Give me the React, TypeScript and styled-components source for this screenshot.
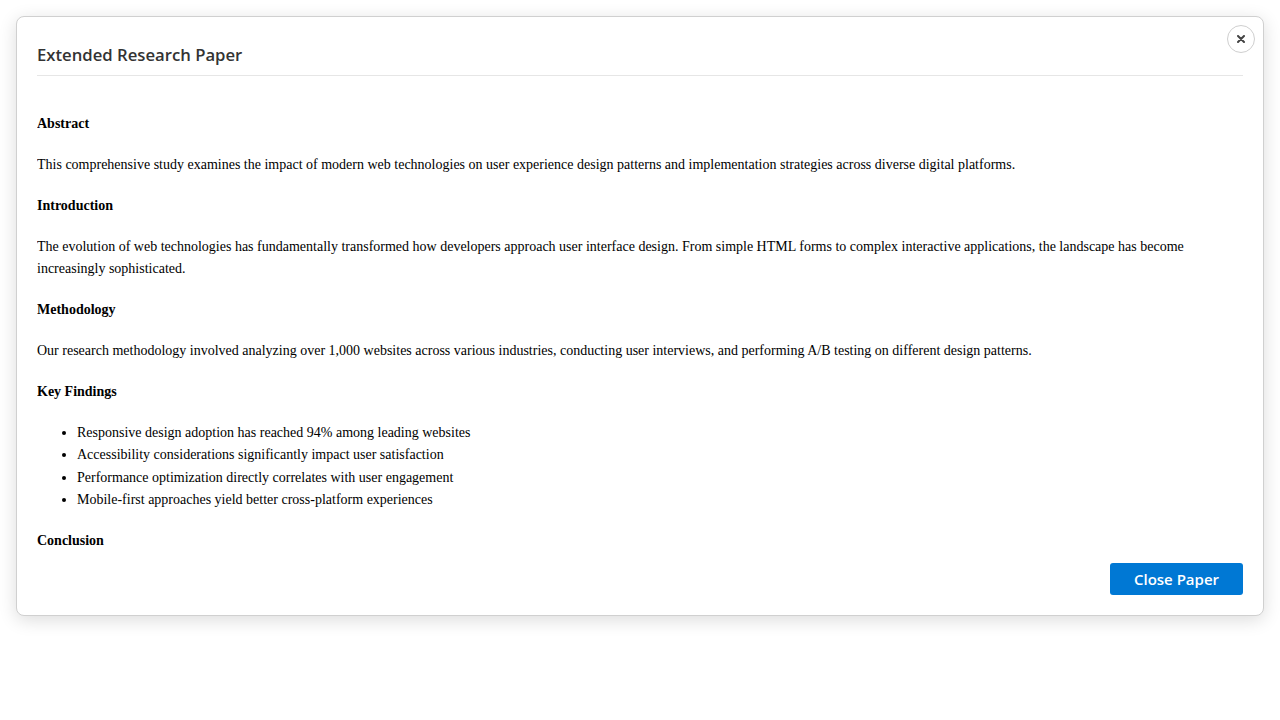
import React from "react";
import styled, { createGlobalStyle } from "styled-components";

const GlobalStyle = createGlobalStyle`
  html, body { margin: 0; padding: 0; background: #ffffff; }
  * { box-sizing: border-box; }
`;

const Page = styled.div`
  width: 1280px;
  height: 720px;
  padding: 16px;
`;

const Modal = styled.div`
  position: relative;
  height: 600px;
  display: flex;
  flex-direction: column;
  background: #ffffff;
  border: 1px solid #d0d0d0;
  border-radius: 8px;
  box-shadow: 0 4px 18px rgba(0, 0, 0, 0.14);
  padding: 20px;
`;

const Header = styled.div`
  border-bottom: 1px solid #e6e6e6;
  padding-top: 4px;
  padding-bottom: 6px;
`;

const Title = styled.h2`
  margin: 0;
  font-family: "Open Sans", "Noto Sans", sans-serif;
  font-weight: 600;
  font-size: 16.7px;
  line-height: 28px;
  color: #333333;
`;

const CloseIcon = styled.button`
  position: absolute;
  top: 8px;
  right: 8px;
  width: 28px;
  height: 28px;
  border-radius: 50%;
  border: 1px solid #cfcfcf;
  background: #ffffff;
  padding: 0;
  display: flex;
  align-items: center;
  justify-content: center;
  cursor: pointer;
`;

const Body = styled.div`
  flex: 1;
  overflow: hidden;
  padding-top: 18px;
  font-family: "Liberation Serif", "Times New Roman", serif;
  font-size: 14px;
  line-height: 1.6;
  color: #000000;
`;

const SectionTitle = styled.h4`
  margin: 18.62px 0;
  font-size: 14px;
  font-weight: bold;
`;

const Paragraph = styled.p`
  margin: 14px 0;
`;

const List = styled.ul`
  margin: 14px 0;
  padding-left: 40px;
`;

const Footer = styled.div`
  display: flex;
  justify-content: flex-end;
  padding-top: 8px;
`;

const PrimaryButton = styled.button`
  height: 32px;
  width: 133px;
  border: none;
  border-radius: 3px;
  background: #0078d4;
  color: #ffffff;
  font-family: "Open Sans", "Noto Sans", sans-serif;
  font-weight: 600;
  font-size: 15px;
  cursor: pointer;
`;

export default function App() {
  return (
    <>
      <GlobalStyle />
      <Page>
        <Modal>
          <CloseIcon aria-label="Close">
            <svg width="8" height="8" viewBox="0 0 8 8">
              <path d="M1 1 L7 7 M7 1 L1 7" stroke="#444" strokeWidth="2" strokeLinecap="round" />
            </svg>
          </CloseIcon>
          <Header>
            <Title>Extended Research Paper</Title>
          </Header>
          <Body>
            <SectionTitle>Abstract</SectionTitle>
            <Paragraph>
              This comprehensive study examines the impact of modern web technologies on user experience design patterns and implementation strategies across diverse digital platforms.
            </Paragraph>
            <SectionTitle>Introduction</SectionTitle>
            <Paragraph>
              The evolution of web technologies has fundamentally transformed how developers approach user interface design. From simple HTML forms to complex interactive applications, the landscape has become increasingly sophisticated.
            </Paragraph>
            <SectionTitle>Methodology</SectionTitle>
            <Paragraph>
              Our research methodology involved analyzing over 1,000 websites across various industries, conducting user interviews, and performing A/B testing on different design patterns.
            </Paragraph>
            <SectionTitle>Key Findings</SectionTitle>
            <List>
              <li>Responsive design adoption has reached 94% among leading websites</li>
              <li>Accessibility considerations significantly impact user satisfaction</li>
              <li>Performance optimization directly correlates with user engagement</li>
              <li>Mobile-first approaches yield better cross-platform experiences</li>
            </List>
            <SectionTitle>Conclusion</SectionTitle>
          </Body>
          <Footer>
            <PrimaryButton>Close Paper</PrimaryButton>
          </Footer>
        </Modal>
      </Page>
    </>
  );
}
